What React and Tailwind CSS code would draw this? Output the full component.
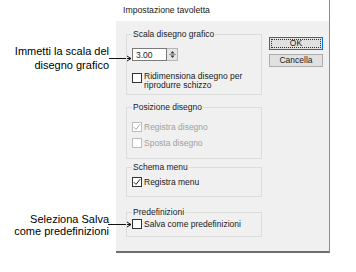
import React from "react";

function Check({ checked, disabled }) {
  return (
    <div
      className={`w-[10px] h-[10px] border bg-white flex items-center justify-center shrink-0 ${
        disabled ? "border-[#bcbcbc]" : "border-[#333333]"
      }`}
    >
      {checked && (
        <svg width="8" height="8" viewBox="0 0 8 8">
          <polyline
            points="0.8,4.2 3,6.4 7.2,1.2"
            fill="none"
            stroke={disabled ? "#a8a8a8" : "#222"}
            strokeWidth="1"
          />
        </svg>
      )}
    </div>
  );
}

function Group({ label, className, children }) {
  return (
    <div className={`relative border border-[#dcdcdc] ${className}`}>
      <span className="absolute left-[5px] top-[-6px] px-[1px] bg-[#f0f0f0] leading-[10px] text-[#1a1a1a]">
        {label}
      </span>
      {children}
    </div>
  );
}

function CheckRow({ checked, disabled, children, className }) {
  return (
    <div className={`flex items-center gap-[2px] ${className}`}>
      <Check checked={checked} disabled={disabled} />
      <span className={`leading-[10px] ${disabled ? "text-[#a0a0a0]" : "text-[#1a1a1a]"}`}>
        {children}
      </span>
    </div>
  );
}

export default function App() {
  return (
    <div
      className="w-[356px] h-[272px] bg-white flex relative"
      style={{ fontFamily: '"Liberation Sans", Arial, sans-serif' }}
    >
      {/* annotations column */}
      <div className="w-[116px] flex flex-col items-end pr-[7px] text-[11px] text-black leading-[14px]">
        <div className="mt-[44px] text-right">
          <div>Immetti la scala del</div>
          <div>disegno grafico</div>
        </div>
        <div className="mt-[141px] text-right leading-[12px]">
          <div>Seleziona Salva</div>
          <div>come predefinizioni</div>
        </div>
      </div>

      {/* leader lines (overlay) */}
      <svg className="absolute left-0 top-0" width="356" height="272" viewBox="0 0 356 272">
        <line x1="109" y1="58.5" x2="131" y2="58.5" stroke="#111" strokeWidth="1" />
        <polyline points="127,56 131,58.5 127,61" fill="none" stroke="#111" strokeWidth="1" />
        <line x1="108" y1="224.5" x2="131" y2="224.5" stroke="#111" strokeWidth="1" />
        <polyline points="127,222 131,224.5 127,227" fill="none" stroke="#111" strokeWidth="1" />
      </svg>

      {/* dialog */}
      <div className="w-[214px] h-[253px] flex flex-col border-r border-r-[#8c8c8c] border-b-2 border-b-[#6e6e6e] text-[8.5px]">
        <div className="h-[21px] bg-white flex items-center pl-[7px] text-[#1a1a1a] text-[8.7px]">
          Impostazione tavoletta
        </div>
        <div className="flex-1 bg-[#f0f0f0] flex pl-[10px]">
          <div className="w-[136px] flex flex-col">
            <Group label="Scala disegno grafico" className="mt-[13px] h-[61px]">
              <div className="flex mt-[13px] ml-[5px] h-[13px]">
                <div className="w-[35px] h-[13px] bg-white border border-[#7a7a7a] flex items-center pl-[3px] text-[#1a1a1a] leading-[10px]">
                  3.00
                </div>
                <div className="w-[11px] h-[13px] bg-[#e6e6e6] border border-l-0 border-[#b5b5b5] flex flex-col items-center justify-center">
                  <svg width="9" height="11" viewBox="0 0 9 11">
                    <polygon points="4.5,2 2.5,4.5 6.5,4.5" fill="#333" />
                    <line x1="1" y1="5.5" x2="8" y2="5.5" stroke="#9a9a9a" strokeWidth="1" />
                    <polygon points="2.5,6.5 6.5,6.5 4.5,9" fill="#333" />
                  </svg>
                </div>
              </div>
              <div className="flex items-start gap-[2px] mt-[11px] ml-[5px]">
                <div className="mt-[1px]">
                  <Check />
                </div>
                <span className="leading-[9px] text-[#1a1a1a]">
                  Ridimensiona disegno per
                  <br />
                  riprodurre schizzo
                </span>
              </div>
            </Group>

            <Group label="Posizione disegno" className="mt-[12px] h-[52px]">
              <CheckRow checked disabled className="mt-[14px] ml-[5px]">
                Registra disegno
              </CheckRow>
              <CheckRow disabled className="mt-[6px] ml-[5px]">
                Sposta disegno
              </CheckRow>
            </Group>

            <Group label="Schema menu" className="mt-[8px] h-[30px]">
              <CheckRow checked className="mt-[9px] ml-[5px]">
                Registra menu
              </CheckRow>
            </Group>

            <Group label="Predefinizioni" className="mt-[15px] h-[25px]">
              <CheckRow className="mt-[6px] ml-[5px]">Salva come predefinizioni</CheckRow>
            </Group>
          </div>

          <div className="ml-[7px] flex flex-col gap-[4px] pt-[16px]">
            <div className="w-[54px] h-[13px] border border-[#0078d7] bg-[#e1e1e1] p-[1px]">
              <div className="w-full h-full border border-dotted border-[#333] flex items-center justify-center text-[#1a1a1a] leading-[9px]">
                OK
              </div>
            </div>
            <div className="w-[54px] h-[13px] border border-[#adadad] bg-[#e1e1e1] flex items-center justify-center text-[#1a1a1a] leading-[9px]">
              Cancella
            </div>
          </div>
        </div>
      </div>
    </div>
  );
}
